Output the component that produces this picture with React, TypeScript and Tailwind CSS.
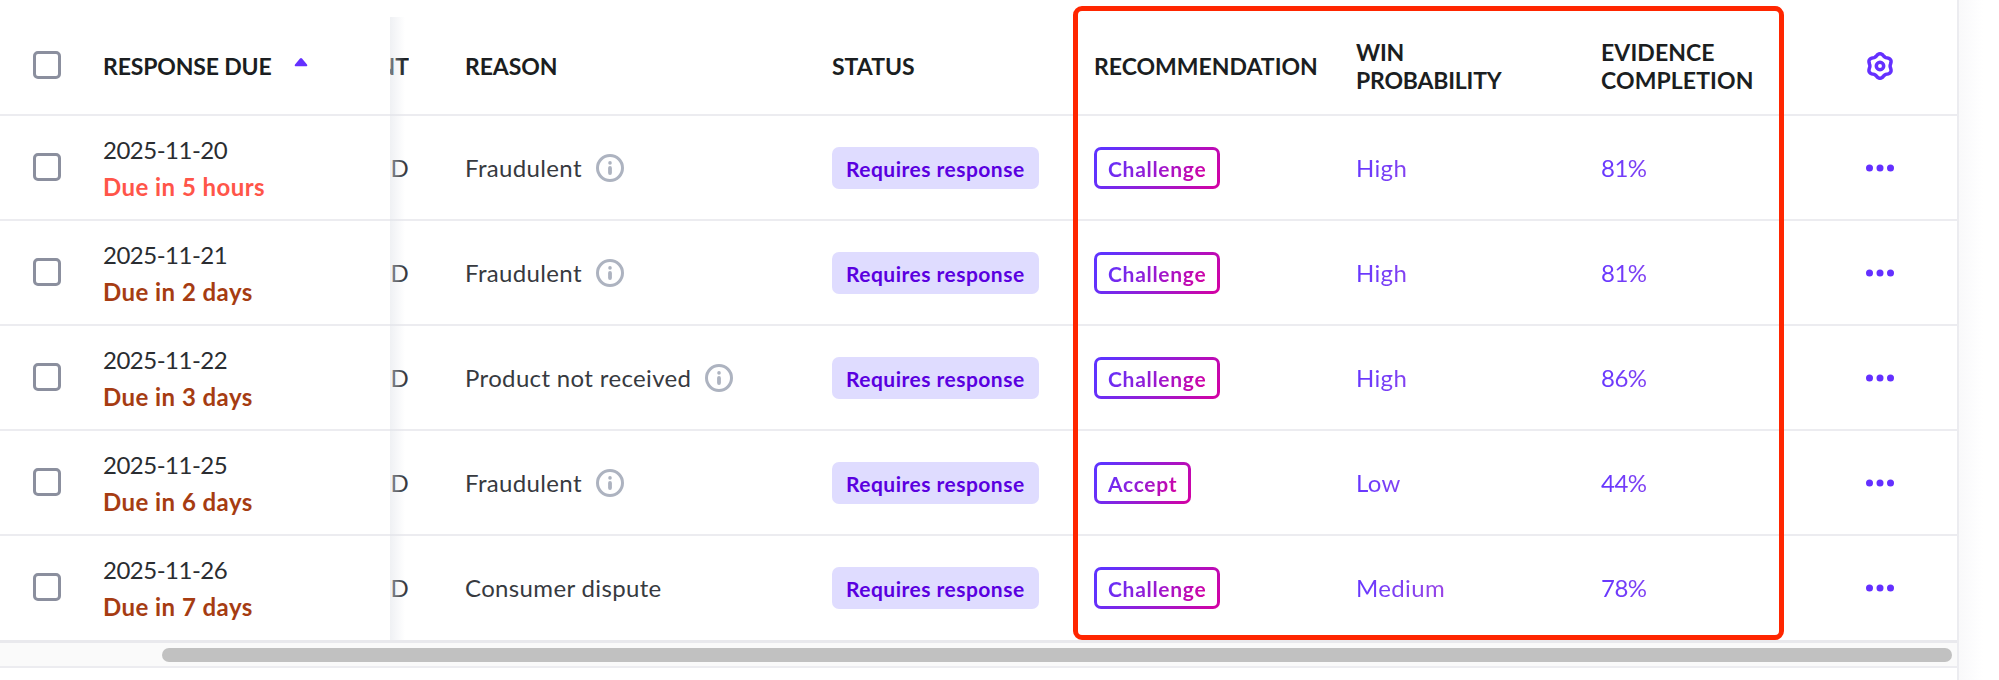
import React from "react";
import clsx from "clsx";

type Dispute = {
  date: string;
  due: string;
  urgent?: boolean;
  reason: string;
  info?: boolean;
  recommendation: string;
  probability: string;
  evidence: string;
};

const DISPUTES: Dispute[] = [
  { date: "2025-11-20", due: "Due in 5 hours", urgent: true, reason: "Fraudulent", info: true, recommendation: "Challenge", probability: "High", evidence: "81%" },
  { date: "2025-11-21", due: "Due in 2 days", reason: "Fraudulent", info: true, recommendation: "Challenge", probability: "High", evidence: "81%" },
  { date: "2025-11-22", due: "Due in 3 days", reason: "Product not received", info: true, recommendation: "Challenge", probability: "High", evidence: "86%" },
  { date: "2025-11-25", due: "Due in 6 days", reason: "Fraudulent", info: true, recommendation: "Accept", probability: "Low", evidence: "44%" },
  { date: "2025-11-26", due: "Due in 7 days", reason: "Consumer dispute", recommendation: "Challenge", probability: "Medium", evidence: "78%" },
];

const COLUMNS =
  "grid grid-cols-[103px_287px_75px_367px_262px_262px_245px_202px_154px] items-center";

const GRADIENT_TEXT = "bg-clip-text text-transparent";

// Six-lobed gear outline, one lobe pointing straight up
const GEAR_POINTS = Array.from({ length: 72 }, (_, i) => {
  const angle = (i / 72) * Math.PI * 2;
  const radius = 11.2 + 1.1 * Math.cos(6 * angle);
  return `${(14 + radius * Math.sin(angle)).toFixed(2)},${(14 - radius * Math.cos(angle)).toFixed(2)}`;
}).join(" ");

function Checkbox() {
  return (
    <span
      role="checkbox"
      aria-checked="false"
      className="mb-[2px] ml-[33px] block size-7 rounded-[5px] border-[3px] border-[#8b8f9e] bg-white"
    />
  );
}

function InfoIcon() {
  return (
    <svg className="size-7 text-[#adb3c0]" viewBox="0 0 28 28" fill="none">
      <circle cx="14" cy="14" r="12.5" stroke="currentColor" strokeWidth="3" />
      <circle cx="14" cy="8.9" r="1.8" fill="currentColor" />
      <path d="M14 14v5" stroke="currentColor" strokeWidth="3.8" strokeLinecap="round" />
    </svg>
  );
}

function GearIcon() {
  return (
    <svg className="size-7 text-[#6430ff]" viewBox="0 0 28 28" fill="none" stroke="currentColor" strokeWidth="3.5">
      <polygon points={GEAR_POINTS} strokeLinejoin="round" />
      <circle cx="14" cy="14" r="3.7" />
    </svg>
  );
}

function MoreIcon() {
  return (
    <svg className="mt-px h-2 w-7 text-[#6430ff]" viewBox="0 0 28 8" fill="currentColor">
      <circle cx="3.5" cy="4" r="3.5" />
      <circle cx="14" cy="4" r="3.5" />
      <circle cx="24.5" cy="4" r="3.5" />
    </svg>
  );
}

function RecommendationBadge({ label }: { label: string }) {
  return (
    <span className="inline-flex h-[42px] rounded-[7px] bg-[linear-gradient(120deg,#5f33ff_10%,#d600a1)] p-[3px]">
      <span className="flex items-center rounded-[4px] bg-white px-[11px]">
        <span
          className={clsx(
            "bg-[linear-gradient(120deg,#5f33ff,#d600a1)] py-1 text-[21px] leading-none font-bold tracking-[0.7px]",
            GRADIENT_TEXT
          )}
        >
          {label}
        </span>
      </span>
    </span>
  );
}

function HeaderRow() {
  return (
    <div
      className={clsx(
        COLUMNS,
        "h-[116px] border-b-2 border-[#ececf0] pt-[17px] text-[23px] leading-7 font-bold text-[#1b1e21]"
      )}
    >
      <Checkbox />
      <div className="flex items-center gap-[22px] tracking-[-0.15px]">
        <span>RESPONSE DUE</span>
        <svg className="-mt-[7px] h-[9px] w-[14px]" viewBox="0 0 14 9" fill="#6430ff">
          <path d="M6 .6a1.4 1.4 0 0 1 2 0l5 5.8c.6.8.2 1.8-.8 1.8H1.8C.8 8.2.4 7.2 1 6.4Z" />
        </svg>
      </div>
      <div className="flex w-[19px] justify-end overflow-hidden">NT</div>
      <div className="tracking-[-0.1px]">REASON</div>
      <div>STATUS</div>
      <div>RECOMMENDATION</div>
      <div className="tracking-[-0.2px]">
        WIN
        <br />
        PROBABILITY
      </div>
      <div className="tracking-[0.1px]">
        EVIDENCE
        <br />
        COMPLETION
      </div>
      <div className="flex justify-center">
        <GearIcon />
      </div>
    </div>
  );
}

function DisputeRow({ dispute, last }: { dispute: Dispute; last: boolean }) {
  return (
    <div
      className={clsx(
        COLUMNS,
        "text-2xl tracking-[0.35px] text-[#373a3f]",
        last ? "h-[107px] border-b-[3px] border-[#e9e9ed] pb-px" : "h-[105px] border-b-2 border-[#ececf0]"
      )}
    >
      <Checkbox />
      <div className="leading-[37px]">
        <div className="tracking-[-0.5px] text-[#2a2d31]">{dispute.date}</div>
        <div className={clsx("font-bold tracking-[0.45px]", dispute.urgent ? "text-[#ff5549]" : "text-[#a63c12]")}>
          {dispute.due}
        </div>
      </div>
      <div className="w-[19px] text-right">D</div>
      <div className="flex items-center gap-[14px] pt-px">
        <span>{dispute.reason}</span>
        {dispute.info && <InfoIcon />}
      </div>
      <div className="flex pt-px">
        <span className="inline-flex h-[42px] items-center rounded-[7px] bg-[#dfdcff] px-[14px] text-[21px] leading-none font-bold tracking-[0.48px] text-[#5a00e0]">
          Requires response
        </span>
      </div>
      <div className="flex pt-px">
        <RecommendationBadge label={dispute.recommendation} />
      </div>
      <div className={clsx("mr-12 bg-linear-to-r from-[#6636ff] to-[#d83fc4] pt-px", GRADIENT_TEXT)}>
        {dispute.probability}
      </div>
      <div className={clsx("bg-linear-to-r from-[#6636ff] to-[#d83fc4] pt-px tracking-[-0.5px]", GRADIENT_TEXT)}>
        {dispute.evidence}
      </div>
      <div className="flex justify-center">
        <MoreIcon />
      </div>
    </div>
  );
}

export default function App() {
  return (
    <div className="flex h-[680px] w-[1999px] overflow-hidden bg-white font-['Lato',sans-serif]">
      <div className="relative w-[1959px] border-r-2 border-[#ececf0]">
        <HeaderRow />
        {DISPUTES.map((dispute, i) => (
          <DisputeRow key={dispute.date} dispute={dispute} last={i === DISPUTES.length - 1} />
        ))}

        {/* Horizontal scrollbar */}
        <div className="flex h-[25px] items-center border-b-2 border-[#ececf0] bg-[#fafafa] pr-[5px] pl-[162px]">
          <div className="h-[14px] w-full rounded-full bg-[#c1c1c1]" />
        </div>

        {/* Shadow cast by the pinned columns */}
        <div className="absolute top-[17px] left-[390px] h-[623px] w-[15px] bg-linear-to-r from-[#dfe2e8]/50 to-transparent" />

        {/* Highlight around the AI columns */}
        <div className="absolute top-[6px] left-[1073px] h-[634px] w-[711px] rounded-[9px] border-[5px] border-[#ff2600]" />
      </div>
      <div className="flex-1 bg-linear-to-r from-[#f9f9fa] to-white to-60%" />
    </div>
  );
}
